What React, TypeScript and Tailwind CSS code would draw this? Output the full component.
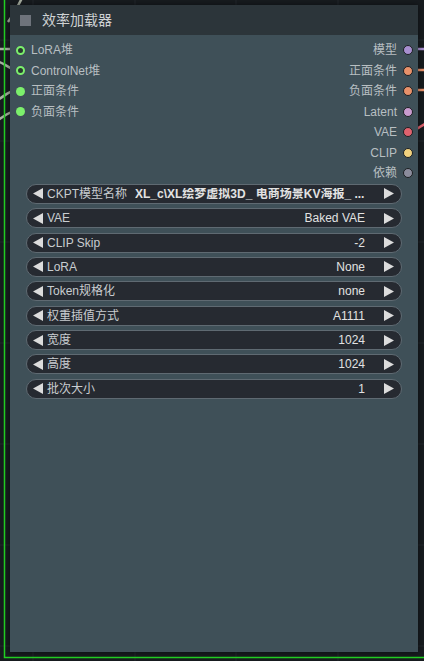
import React from 'react';

const FONT = "font-['Liberation_Sans','Noto_Sans_CJK_SC',sans-serif]";

interface Slot {
  label: string;
  color: string;
  ring?: boolean;
}

const inputs: Slot[] = [
  { label: 'LoRA堆', color: '#7cf06c', ring: true },
  { label: 'ControlNet堆', color: '#7cf06c', ring: true },
  { label: '正面条件', color: '#7cf06c' },
  { label: '负面条件', color: '#7cf06c' },
];

const outputs: Slot[] = [
  { label: '模型', color: '#a88fd0' },
  { label: '正面条件', color: '#e8916a' },
  { label: '负面条件', color: '#e8916a' },
  { label: 'Latent', color: '#c99bcf' },
  { label: 'VAE', color: '#e0626e' },
  { label: 'CLIP', color: '#f2d27e' },
  { label: '依赖', color: '#8b8c9c' },
];

const widgets = [
  { name: 'CKPT模型名称', value: 'XL_c\\XL绘梦虚拟3D_ 电商场景KV海报_ ...', wide: true },
  { name: 'VAE', value: 'Baked VAE' },
  { name: 'CLIP Skip', value: '-2' },
  { name: 'LoRA', value: 'None' },
  { name: 'Token规格化', value: 'none' },
  { name: '权重插值方式', value: 'A1111' },
  { name: '宽度', value: '1024' },
  { name: '高度', value: '1024' },
  { name: '批次大小', value: '1' },
];

const Arrow = ({ dir }: { dir: 'left' | 'right' }) => (
  <svg width="10" height="11" viewBox="0 0 10 11" className="shrink-0">
    {dir === 'left' ? (
      <polygon points="10,0 10,11 0,5.5" fill="#dcdcdc" />
    ) : (
      <polygon points="0,0 0,11 10,5.5" fill="#dcdcdc" />
    )}
  </svg>
);

const Wires = () => (
  <svg className="absolute inset-0" width="424" height="661" viewBox="0 0 424 661">
    {/* canvas grid */}
    {[33, 135, 236, 338].map((x) => (
      <line key={x} x1={x} y1="0" x2={x} y2="661" stroke="#22282d" strokeWidth="1" />
    ))}
    {[40, 141, 242, 343, 444, 545, 646].map((y) => (
      <line key={y} x1="0" y1={y} x2="424" y2={y} stroke="#22282d" strokeWidth="1" />
    ))}
    {/* input links */}
    <path d="M8 22 C 14 14, 18 6, 22 -2" stroke="#a9b0a2" strokeWidth="2.5" fill="none" />
    <path d="M-4 49 L 20 49" stroke="#a9b0a2" strokeWidth="2.5" fill="none" />
    <path d="M-4 61 C 6 63, 8 70, 20 70" stroke="#a9b0a2" strokeWidth="2.5" fill="none" />
    <path d="M-4 101 C 4 97, 8 90, 20 90" stroke="#a9b0a2" strokeWidth="2.5" fill="none" />
    <path d="M-4 121 C 4 117, 8 111, 20 111" stroke="#a9b0a2" strokeWidth="2.5" fill="none" />
    {/* output links */}
    <path d="M408 49 L 428 49" stroke="#a88fd0" strokeWidth="2.5" fill="none" />
    <path d="M408 70 L 428 70" stroke="#e8916a" strokeWidth="2.5" fill="none" />
    <path d="M408 90 L 428 90" stroke="#e8916a" strokeWidth="2.5" fill="none" />
    <path d="M408 131 C 414 131, 418 128, 428 122" stroke="#e0626e" strokeWidth="2.5" fill="none" />
    {/* selected group outline */}
    <path d="M4.5 0 L 4.5 657.5 L 428 657.5" stroke="#22d022" strokeWidth="1.5" fill="none" />
  </svg>
);

const App: React.FC = () => {
  return (
    <div className={`relative w-[424px] h-[661px] overflow-hidden bg-[#171b1f] ${FONT}`}>
      <Wires />

      {/* Node */}
      <div className="absolute left-[10px] top-[5px] w-[408px] h-[647px] bg-[#3f5058] flex flex-col shadow-[0_0_6px_rgba(0,0,0,0.5)]">
        {/* Title */}
        <div className="h-[30px] bg-[#2c353a] flex items-center pl-[10px] gap-[11px] shrink-0">
          <div className="w-[11px] h-[11px] bg-[#6e737b]" />
          <span className="text-[14px] text-[#cfd2d4]">效率加载器</span>
        </div>

        {/* Slots */}
        <div className="flex pt-[4.75px]">
          <div className="flex flex-col flex-1">
            {inputs.map((s) => (
              <div key={s.label} className="h-[20.5px] flex items-center gap-[6px] pl-[6px]">
                {s.ring ? (
                  <span
                    className="w-[9px] h-[9px] rounded-full border-[2.5px] bg-[#2a3a30]"
                    style={{ borderColor: s.color }}
                  />
                ) : (
                  <span className="w-[9px] h-[9px] rounded-full" style={{ background: s.color }} />
                )}
                <span className="text-[12px] text-[#b8bfc2] leading-none">{s.label}</span>
              </div>
            ))}
          </div>
          <div className="flex flex-col items-end">
            {outputs.map((s) => (
              <div key={s.label} className="h-[20.5px] flex items-center gap-[6px] pr-[5px]">
                <span className="text-[12px] text-[#b8bfc2] leading-none">{s.label}</span>
                <span
                  className="w-[10px] h-[10px] rounded-full border border-[#1c1f22]"
                  style={{ background: s.color }}
                />
              </div>
            ))}
          </div>
        </div>

        {/* Widgets */}
        <div className="flex flex-col gap-[4.4px] px-[16px] mt-[0.5px]">
          {widgets.map((w) => (
            <div
              key={w.name}
              className="h-[20px] rounded-full bg-[#262a31] border border-[#5f6a72] flex items-center pl-[6px] pr-[7px] text-[12px] leading-none"
            >
              <Arrow dir="left" />
              <span className="ml-[4px] text-[#c9cdd0] whitespace-nowrap">{w.name}</span>
              {w.wide ? (
                <span className="ml-[8px] flex-1 text-[#e2e2e2] font-bold whitespace-nowrap overflow-hidden">
                  {w.value}
                </span>
              ) : (
                <span className="flex-1 text-right text-[#e2e2e2] whitespace-nowrap">{w.value}</span>
              )}
              <span className="ml-[19px]">
                <Arrow dir="right" />
              </span>
            </div>
          ))}
        </div>
      </div>
    </div>
  );
};

export default App;
